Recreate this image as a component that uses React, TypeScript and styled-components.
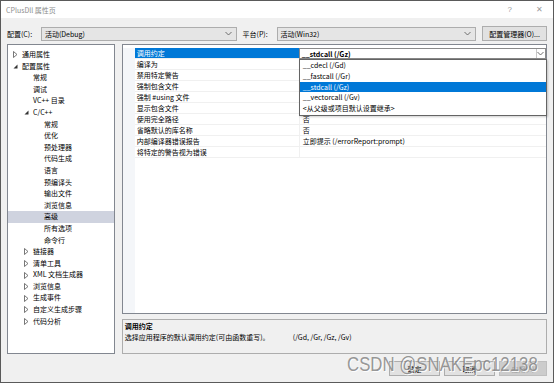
import * as React from 'react'
import styled, { createGlobalStyle, css } from 'styled-components'

const GlobalStyle = createGlobalStyle`
  html, body {
    margin: 0;
    padding: 0;
    background: #ffffff;
  }
  * {
    box-sizing: border-box;
  }
`

const uiFont = `"Noto Sans CJK SC", "Noto Sans", sans-serif`

interface ITreeItem {
  label: string
  level: number
  arrow?: 'collapsed' | 'expanded'
  selected?: boolean
}

interface IPropRow {
  name: string
  value?: string
}

const treeItems: ITreeItem[] = [
  { label: '通用属性', level: 0, arrow: 'collapsed' },
  { label: '配置属性', level: 0, arrow: 'expanded' },
  { label: '常规', level: 1 },
  { label: '调试', level: 1 },
  { label: 'VC++ 目录', level: 1 },
  { label: 'C/C++', level: 1, arrow: 'expanded' },
  { label: '常规', level: 2 },
  { label: '优化', level: 2 },
  { label: '预处理器', level: 2 },
  { label: '代码生成', level: 2 },
  { label: '语言', level: 2 },
  { label: '预编译头', level: 2 },
  { label: '输出文件', level: 2 },
  { label: '浏览信息', level: 2 },
  { label: '高级', level: 2, selected: true },
  { label: '所有选项', level: 2 },
  { label: '命令行', level: 2 },
  { label: '链接器', level: 1, arrow: 'collapsed' },
  { label: '清单工具', level: 1, arrow: 'collapsed' },
  { label: 'XML 文档生成器', level: 1, arrow: 'collapsed' },
  { label: '浏览信息', level: 1, arrow: 'collapsed' },
  { label: '生成事件', level: 1, arrow: 'collapsed' },
  { label: '自定义生成步骤', level: 1, arrow: 'collapsed' },
  { label: '代码分析', level: 1, arrow: 'collapsed' }
]

const propRows: IPropRow[] = [
  { name: '调用约定' },
  { name: '编译为' },
  { name: '禁用特定警告' },
  { name: '强制包含文件' },
  { name: '强制 #using 文件' },
  { name: '显示包含文件' },
  { name: '使用完全路径', value: '否' },
  { name: '省略默认的库名称', value: '否' },
  { name: '内部编译器错误报告', value: '立即提示 (/errorReport:prompt)' },
  { name: '将特定的警告视为错误' }
]

const dropOptions = [
  '__cdecl (/Gd)',
  '__fastcall (/Gr)',
  '__stdcall (/Gz)',
  '__vectorcall (/Gv)',
  '<从父级或项目默认设置继承>'
]

const Window = styled.div`
  position: relative;
  width: 554px;
  height: 383px;
  border: 1px solid #5a5a5a;
  background: #f0f0f0;
  font-family: ${uiFont};
  font-size: 7px;
  color: #000;
  display: flex;
  flex-direction: column;
  overflow: hidden;
`

const TitleBar = styled.div`
  height: 17px;
  background: #ffffff;
  display: flex;
  align-items: center;
  padding: 0 5px;
  color: #8c8c8c;
`

const TitleText = styled.span`
  flex: 1;
`

const TitleButton = styled.span<{ $gap: number }>`
  margin-left: ${({ $gap }) => $gap}px;
  font-family: "Liberation Sans", sans-serif;
  font-size: 8px;
  color: #9a9a9a;
`

const Body = styled.div`
  flex: 1;
  display: flex;
  flex-direction: column;
  padding: 8px 6px 0 6px;
`

const ConfigRow = styled.div`
  height: 15px;
  display: flex;
  align-items: center;
`

const FieldLabel = styled.span`
  width: 34px;
  white-space: nowrap;
`

const Select = styled.div<{ $width: number }>`
  width: ${({ $width }) => $width}px;
  height: 14px;
  border: 1px solid #adadad;
  background: #e5e5e5;
  display: flex;
  align-items: center;
  justify-content: space-between;
  padding: 0 4px 0 3px;
  margin-right: 6px;
`

const Button = styled.div<{ $width: number; $disabled?: boolean }>`
  width: ${({ $width }) => $width}px;
  height: 15px;
  border: 1px solid #adadad;
  background: #e1e1e1;
  display: flex;
  align-items: center;
  justify-content: center;
  white-space: nowrap;
  ${({ $disabled }) =>
    $disabled &&
    css`
      background: #cccccc;
      border-color: #bfbfbf;
      color: #a0a0a0;
    `}
`

const Main = styled.div`
  margin-top: 3px;
  height: 310px;
  display: flex;
  gap: 7px;
`

const TreePanel = styled.div`
  width: 108px;
  height: 100%;
  background: #ffffff;
  border: 1px solid #828790;
  padding-top: 4px;
`

const TreeRow = styled.div<{ $level: number; $selected?: boolean }>`
  height: 11.6px;
  line-height: 11.6px;
  display: flex;
  align-items: center;
  white-space: nowrap;
  padding-left: ${({ $level }) => 5 + $level * 11}px;
  background: ${({ $selected }) => ($selected ? '#cfd3df' : 'transparent')};
`

const ArrowBox = styled.span`
  width: 9px;
  height: 11px;
  display: flex;
  align-items: center;
`

const RightColumn = styled.div`
  width: 426px;
  display: flex;
  flex-direction: column;
  gap: 5px;
`

const Grid = styled.div`
  position: relative;
  height: 270px;
  background: #ffffff;
  border: 1px solid #828790;
  padding-top: 3px;
  display: flex;
  flex-direction: column;
`

const PropRow = styled.div`
  display: flex;
  height: 11px;
  line-height: 10px;
`

const Gutter = styled.div`
  width: 12px;
  background: #f4f6f9;
`

const NameCell = styled.div<{ $active?: boolean }>`
  width: 165px;
  padding-left: 2px;
  border-bottom: 1px solid #f0f0f0;
  border-right: 1px solid #f0f0f0;
  white-space: nowrap;
  ${({ $active }) =>
    $active &&
    css`
      background: #0078d7;
      color: #ffffff;
    `}
`

const ValueCell = styled.div`
  flex: 1;
  padding-left: 3px;
  border-bottom: 1px solid #f0f0f0;
  white-space: nowrap;
`

const GutterFill = styled.div`
  flex: 1;
  width: 12px;
  background: #f4f6f9;
`

const Combo = styled.div`
  position: absolute;
  left: 176px;
  top: 3px;
  width: 247px;
  height: 11px;
  background: #ffffff;
  border: 1px solid #8a8a8a;
  display: flex;
  align-items: center;
  padding-left: 2px;
  font-weight: bold;
`

const ComboText = styled.span`
  flex: 1;
`

const ComboArrow = styled.span`
  width: 9px;
  height: 100%;
  border-left: 1px solid #c8c8c8;
  display: flex;
  align-items: center;
  justify-content: center;
`

const DropList = styled.div`
  position: absolute;
  left: 176px;
  top: 14px;
  width: 248px;
  height: 57px;
  background: #ffffff;
  border: 1px solid #646464;
  box-shadow: 1px 1px 2px rgba(0, 0, 0, 0.2);
`

const DropItem = styled.div<{ $selected?: boolean }>`
  height: 10.8px;
  line-height: 10.8px;
  padding-left: 3px;
  white-space: nowrap;
  ${({ $selected }) =>
    $selected &&
    css`
      background: #0078d7;
      color: #ffffff;
    `}
`

const DescBox = styled.div`
  flex: 1;
  background: #f0f0f0;
  border: 1px solid #adadad;
  padding: 1px 2px;
  line-height: 11px;
`

const DescTitle = styled.div`
  font-weight: bold;
`

const DescLine = styled.div`
  display: grid;
  grid-template-columns: 168px auto;
  white-space: nowrap;
`

const Footer = styled.div`
  margin-top: 7px;
  display: flex;
  justify-content: flex-end;
  gap: 4px;
`

const Watermark = styled.div`
  position: absolute;
  left: 346px;
  top: 352px;
  font-family: "Liberation Sans", Arial, sans-serif;
  font-size: 20px;
  color: rgba(125, 125, 125, 0.8);
  text-shadow: 1px 1px 0 rgba(255, 255, 255, 0.9);
  transform: scaleX(0.84);
  transform-origin: left top;
  white-space: nowrap;
  pointer-events: none;
`

function Chevron() {
  return (
    <svg width="7" height="5" viewBox="0 0 7 5">
      <path d="M0.5 1 L3.5 4 L6.5 1" fill="none" stroke="#606060" strokeWidth="0.9" />
    </svg>
  )
}

function TreeArrow({ kind }: { kind?: 'collapsed' | 'expanded' }) {
  if (kind === 'collapsed') {
    return (
      <svg width="5" height="7" viewBox="0 0 5 7">
        <path d="M0.5 0.5 L4 3.5 L0.5 6.5 Z" fill="none" stroke="#555" strokeWidth="0.8" />
      </svg>
    )
  }
  if (kind === 'expanded') {
    return (
      <svg width="5" height="5" viewBox="0 0 5 5">
        <path d="M4.5 0.5 L4.5 4.5 L0.5 4.5 Z" fill="#333" />
      </svg>
    )
  }
  return null
}

export default function App() {
  return (
    <>
      <GlobalStyle />
      <Window>
        <TitleBar>
          <TitleText>CPlusDll 属性页</TitleText>
          <TitleButton $gap={0}>?</TitleButton>
          <TitleButton $gap={24}>✕</TitleButton>
          <span style={{ width: 5 }} />
        </TitleBar>
        <Body>
          <ConfigRow>
            <FieldLabel>配置(C):</FieldLabel>
            <Select $width={196}>
              <span>活动(Debug)</span>
              <Chevron />
            </Select>
            <FieldLabel>平台(P):</FieldLabel>
            <Select $width={200}>
              <span>活动(Win32)</span>
              <Chevron />
            </Select>
            <Button $width={65}>配置管理器(O)...</Button>
          </ConfigRow>
          <Main>
            <TreePanel>
              {treeItems.map((item, i) => (
                <TreeRow key={i} $level={item.level} $selected={item.selected}>
                  <ArrowBox>
                    <TreeArrow kind={item.arrow} />
                  </ArrowBox>
                  <span>{item.label}</span>
                </TreeRow>
              ))}
            </TreePanel>
            <RightColumn>
              <Grid>
                {propRows.map((row, i) => (
                  <PropRow key={i}>
                    <Gutter />
                    <NameCell $active={i === 0}>{row.name}</NameCell>
                    <ValueCell>{row.value}</ValueCell>
                  </PropRow>
                ))}
                <GutterFill />
                <Combo>
                  <ComboText>__stdcall (/Gz)</ComboText>
                  <ComboArrow>
                    <Chevron />
                  </ComboArrow>
                </Combo>
                <DropList>
                  {dropOptions.map((opt, i) => (
                    <DropItem key={i} $selected={i === 2}>
                      {opt}
                    </DropItem>
                  ))}
                </DropList>
              </Grid>
              <DescBox>
                <DescTitle>调用约定</DescTitle>
                <DescLine>
                  <span>选择应用程序的默认调用约定(可由函数重写)。</span>
                  <span>(/Gd, /Gr, /Gz, /Gv)</span>
                </DescLine>
              </DescBox>
            </RightColumn>
          </Main>
          <Footer>
            <Button $width={51}>确定</Button>
            <Button $width={51}>取消</Button>
            <Button $width={48} $disabled>
              应用(A)
            </Button>
          </Footer>
        </Body>
        <Watermark>CSDN @SNAKEpc12138</Watermark>
      </Window>
    </>
  )
}
